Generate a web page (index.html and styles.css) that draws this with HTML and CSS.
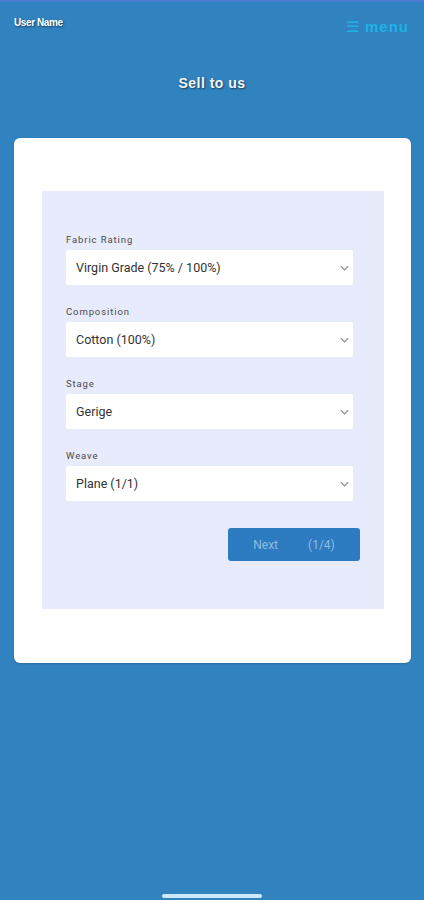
FILE: index.html
```html
<!DOCTYPE html>
<html>
<head>
<meta charset="utf-8">
<link rel="stylesheet" href="styles.css">
</head>
<body>
<div class="screen">
  <div class="topline"></div>
  <header class="header">
    <span class="user">User Name</span>
    <span class="menu"><span class="burger">☰</span> menu</span>
  </header>
  <h1 class="title">Sell to us</h1>
  <div class="card">
    <div class="panel">
      <div class="field">
        <label class="label">Fabric Rating</label>
        <div class="select"><span>Virgin Grade (75% / 100%)</span><svg class="chev" viewBox="0 0 10 6"><path d="M1 1l4 4 4-4" fill="none" stroke="#888" stroke-width="1.3"/></svg></div>
      </div>
      <div class="field">
        <label class="label">Composition</label>
        <div class="select"><span>Cotton (100%)</span><svg class="chev" viewBox="0 0 10 6"><path d="M1 1l4 4 4-4" fill="none" stroke="#888" stroke-width="1.3"/></svg></div>
      </div>
      <div class="field">
        <label class="label">Stage</label>
        <div class="select"><span>Gerige</span><svg class="chev" viewBox="0 0 10 6"><path d="M1 1l4 4 4-4" fill="none" stroke="#888" stroke-width="1.3"/></svg></div>
      </div>
      <div class="field">
        <label class="label">Weave</label>
        <div class="select"><span>Plane (1/1)</span><svg class="chev" viewBox="0 0 10 6"><path d="M1 1l4 4 4-4" fill="none" stroke="#888" stroke-width="1.3"/></svg></div>
      </div>
      <div class="actions">
        <button class="next"><span>Next</span><span>(1/4)</span></button>
      </div>
    </div>
  </div>
  <div class="spacer"></div>
  <div class="home"></div>
</div>
</body>
</html>
```
FILE: styles.css
```css
html, body {
  margin: 0;
  padding: 0;
}
body {
  background: #3183bf;
  font-family: Roboto, "Liberation Sans", Arial, sans-serif;
}
.screen {
  height: 900px;
  display: flex;
  flex-direction: column;
}
.topline {
  height: 2px;
  background: #4d7ed2;
}
.header {
  display: flex;
  justify-content: space-between;
  align-items: flex-start;
  padding: 14px 15px 0 14px;
  height: 30px;
}
.user {
  font-family: "Liberation Sans", Arial, sans-serif;
  font-size: 10px;
  font-weight: bold;
  color: #fff;
  letter-spacing: -0.4px;
  text-shadow: 1px 1px 2px rgba(0,0,0,0.55);
  margin-top: 1px;
}
.menu {
  font-family: "Liberation Sans", Arial, sans-serif;
  font-size: 15px;
  font-weight: bold;
  color: #1db2e6;
  letter-spacing: 1px;
  margin-top: 2px;
}
.burger {
  font-size: 15px;
  font-weight: normal;
}
.title {
  margin: 27px 0 0 0;
  text-align: center;
  font-family: "Liberation Sans", Arial, sans-serif;
  font-size: 14px;
  font-weight: bold;
  letter-spacing: 0.5px;
  color: #f4f4f4;
  text-shadow: 1px 1px 2px rgba(0,0,0,0.55);
  height: 20px;
  line-height: 20px;
}
.card {
  margin: 45px 13px 0 14px;
  background: #fff;
  border-radius: 6px;
  padding: 53px 27px 54px 28px;
  box-shadow: 0 1px 2px rgba(0,0,0,0.15);
}
.panel {
  background: #e8ebfc;
  height: 418px;
  box-sizing: border-box;
  padding: 43px 31px 0 24px;
}
.field {
  margin-bottom: 21px;
}
.label {
  display: block;
  font-size: 9.5px;
  letter-spacing: 0.9px;
  color: #4a4a4a;
  height: 11px;
  line-height: 11px;
  margin-bottom: 5px;
}
.select {
  height: 35px;
  background: #fff;
  border-radius: 2px;
  display: flex;
  align-items: center;
  justify-content: space-between;
  padding: 0 4px 0 10px;
  font-size: 12.5px;
  color: #333;
}
.chev {
  width: 9px;
  height: 6px;
}
.actions {
  display: flex;
  justify-content: flex-end;
  margin-right: -7px;
  margin-top: 27px;
}
.next {
  width: 132px;
  height: 33px;
  border: none;
  border-radius: 3px;
  background: #2d7bc0;
  color: #8fbbe2;
  font-family: Roboto, "Liberation Sans", Arial, sans-serif;
  font-size: 12px;
  display: flex;
  align-items: center;
  justify-content: center;
  gap: 30px;
  padding: 0;
}
.spacer {
  flex: 1;
}
.home {
  width: 100px;
  height: 4px;
  border-radius: 2px;
  background: #cfe9fa;
  margin: 0 auto 2px auto;
}
```
